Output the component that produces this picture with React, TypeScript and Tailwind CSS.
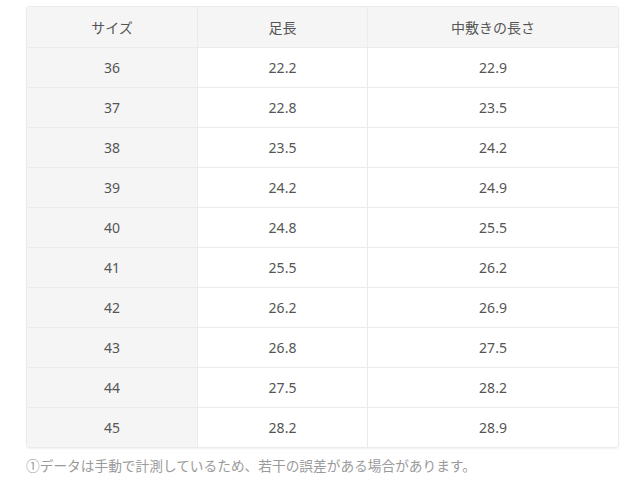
import React from 'react'

const rows = [
  ['36', '22.2', '22.9'],
  ['37', '22.8', '23.5'],
  ['38', '23.5', '24.2'],
  ['39', '24.2', '24.9'],
  ['40', '24.8', '25.5'],
  ['41', '25.5', '26.2'],
  ['42', '26.2', '26.9'],
  ['43', '26.8', '27.5'],
  ['44', '27.5', '28.2'],
  ['45', '28.2', '28.9'],
]

function App() {
  return (
    <div
      className="min-h-[499px] bg-white px-[26px] pt-[6px] text-[#555]"
      style={{ fontFamily: '"Noto Sans", "Noto Sans CJK JP", sans-serif' }}
    >
      <div className="w-[593px] overflow-hidden rounded-[3px] border border-[#ebebeb] shadow-[0_1px_2px_rgba(0,0,0,0.06)]">
        <div className="grid h-[40px] grid-cols-[171px_170px_1fr] bg-[#f5f5f5] text-[14px]">
          <div className="flex items-center justify-center border-r border-[#ebebeb]">サイズ</div>
          <div className="flex items-center justify-center border-r border-[#ebebeb]">足長</div>
          <div className="flex items-center justify-center">中敷きの長さ</div>
        </div>
        {rows.map((r, i) => (
          <div key={i} className="grid h-[40px] grid-cols-[171px_170px_1fr] border-t border-[#ebebeb] text-[14px]">
            <div className="flex items-center justify-center border-r border-[#ebebeb] bg-[#f5f5f5]">{r[0]}</div>
            <div className="flex items-center justify-center border-r border-[#ebebeb]">{r[1]}</div>
            <div className="flex items-center justify-center">{r[2]}</div>
          </div>
        ))}
      </div>
      <p className="mt-[8px] text-[13.7px] text-[#9a9a9a]">①データは手動で計測しているため、若干の誤差がある場合があります。</p>
    </div>
  )
}

export default App
